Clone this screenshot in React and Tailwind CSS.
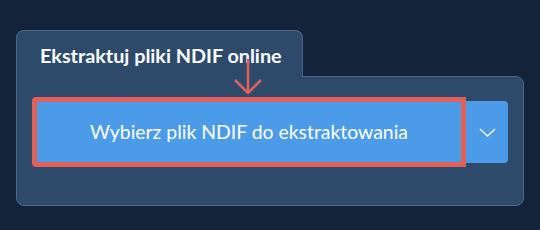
import React from "react";

export default function App() {
  return (
    <div
      className="relative w-[540px] h-[230px] bg-[#12233a] pt-[30px] pl-[16px]"
      style={{ fontFamily: "Lato, 'Open Sans', sans-serif" }}
    >
      <div className="w-[508px]">
        <div className="relative z-10 -mb-px w-[287px] h-[47px] rounded-t-[8px] border border-b-0 border-[#4b6889] bg-[#2d4a6b] pl-[23px] pt-[12px]">
          <span className="text-[19.8px] font-bold leading-[24px] text-white">Ekstraktuj pliki NDIF online</span>
        </div>
        <div className="h-[130px] rounded-b-[8px] rounded-tr-[8px] border border-[#4b6889] bg-[#2d4a6b] pl-[15px] pt-[20px]">
          <div className="flex items-center">
            <button className="flex h-[70px] w-[434px] items-center justify-center rounded-l-[4px] border-[5px] border-[#e0605a] bg-[#4c9be8] text-[19.4px] font-normal text-white">
              Wybierz plik NDIF do ekstraktowania
            </button>
            <button className="flex h-[62px] w-[42px] items-center justify-center rounded-r-[4px] bg-[#4c9be8]">
              <svg width="17" height="9" viewBox="0 0 17 9" fill="none">
                <path d="M1 1l7.5 7 7.5-7" stroke="white" strokeWidth="1.3" />
              </svg>
            </button>
          </div>
        </div>
      </div>
      <svg
        className="absolute z-20 left-[232px] top-[58px]"
        width="32"
        height="38"
        viewBox="0 0 32 38"
        fill="none"
      >
        <path d="M16 1v34M3 22l13 13 13-13" stroke="#e0605a" strokeWidth="2.5" />
      </svg>
    </div>
  );
}
